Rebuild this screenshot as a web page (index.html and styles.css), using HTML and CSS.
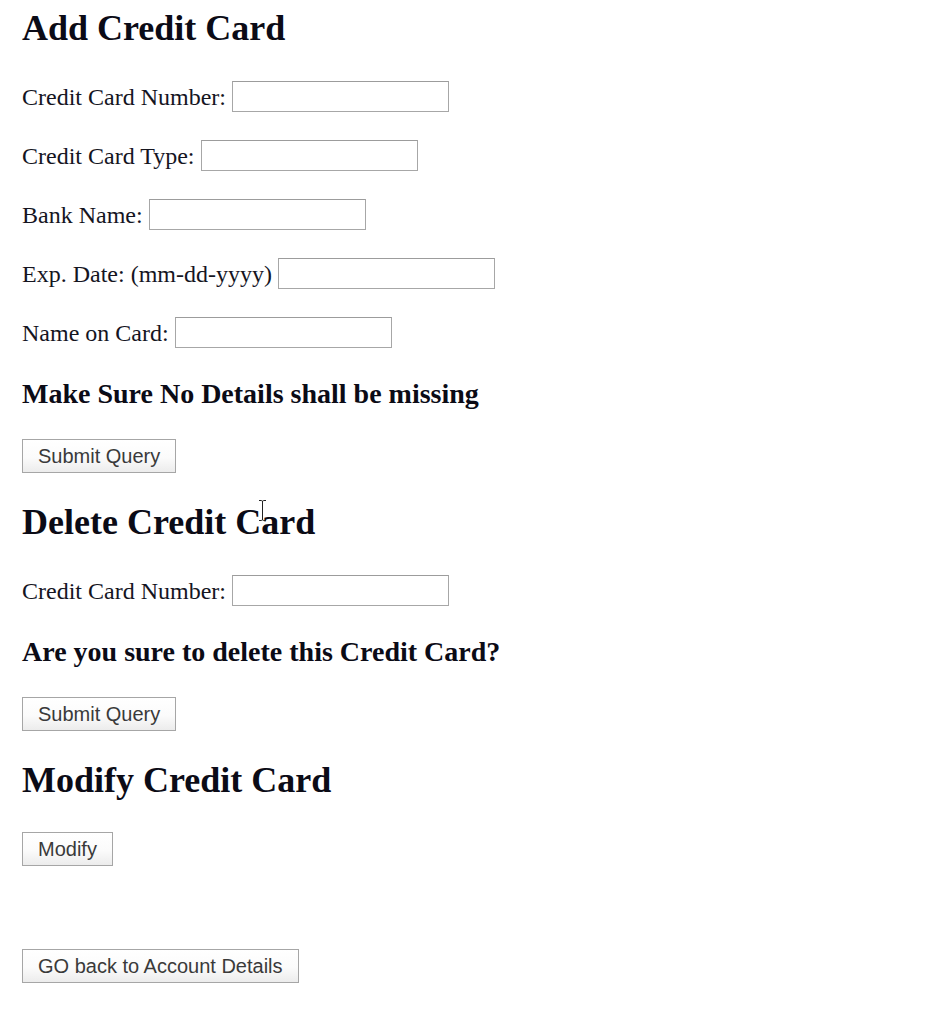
FILE: index.html
```html
<!DOCTYPE html>
<html>
<head>
<meta charset="utf-8">
<title>Credit Card</title>
<link rel="stylesheet" href="styles.css">
</head>
<body>
<div class="page">
  <form class="section">
    <h2 class="title">Add Credit Card</h2>
    <div class="fields">
      <div class="row"><span class="label">Credit Card Number:</span><input class="box" type="text"></div>
      <div class="row"><span class="label">Credit Card Type:</span><input class="box" type="text"></div>
      <div class="row"><span class="label">Bank Name:</span><input class="box" type="text"></div>
      <div class="row"><span class="label">Exp. Date: (mm-dd-yyyy)</span><input class="box" type="text"></div>
      <div class="row"><span class="label">Name on Card:</span><input class="box" type="text"></div>
    </div>
    <h3 class="note">Make Sure No Details shall be missing</h3>
    <button class="btn" type="button">Submit Query</button>
  </form>

  <form class="section">
    <h2 class="title">Delete Credit Card<span class="cursor"><svg width="9" height="23" viewBox="0 0 9 23"><path d="M1 1.5 H3.5 Q4.5 1.5 4.5 3 V20 Q4.5 21.5 3.5 21.5 H1 M8 1.5 H5.5 Q4.5 1.5 4.5 3 M4.5 20 Q4.5 21.5 5.5 21.5 H8" fill="none" stroke="#222" stroke-width="1"/></svg></span></h2>
    <div class="fields">
      <div class="row"><span class="label">Credit Card Number:</span><input class="box" type="text"></div>
    </div>
    <h3 class="note">Are you sure to delete this Credit Card?</h3>
    <button class="btn" type="button">Submit Query</button>
  </form>

  <form class="section">
    <h2 class="title">Modify Credit Card</h2>
    <button class="btn btn-modify" type="button">Modify</button>
  </form>

  <div class="back">
    <button class="btn" type="button">GO back to Account Details</button>
  </div>
</div>
</body>
</html>
```
FILE: styles.css
```css
html, body {
  margin: 0;
  padding: 0;
  background: #ffffff;
}

body {
  font-family: "Liberation Serif", "Times New Roman", serif;
  color: #15151f;
}

.page {
  padding: 7px 22px 0 22px;
  display: flex;
  flex-direction: column;
  align-items: flex-start;
}

.section {
  display: flex;
  flex-direction: column;
  align-items: flex-start;
  margin: 0;
}

.title {
  font-size: 36px;
  line-height: 42px;
  font-weight: bold;
  margin: 0;
  color: #0b0b16;
  position: relative;
}

.section + .section .title {
  margin-top: 28px;
}

.cursor {
  position: absolute;
  left: 236px;
  top: -2px;
  width: 9px;
  height: 23px;
  display: block;
}

.cursor svg {
  display: block;
}

.fields {
  display: flex;
  flex-direction: column;
  gap: 28px;
  margin-top: 32px;
}

.row {
  display: flex;
  align-items: center;
  height: 31px;
  gap: 6px;
}

.label {
  font-size: 24px;
  line-height: 28px;
  white-space: nowrap;
}

.box {
  box-sizing: border-box;
  width: 217px;
  height: 31px;
  margin: 0;
  padding: 0 4px;
  border: 1px solid #a7a7a7;
  border-top-color: #9c9c9c;
  background: #ffffff;
  font-family: "Liberation Sans", Arial, sans-serif;
  font-size: 20px;
}

.note {
  font-size: 28px;
  line-height: 32px;
  font-weight: bold;
  margin: 30px 0 29px 0;
  color: #0b0b16;
}

.btn {
  box-sizing: border-box;
  height: 34px;
  margin: 0;
  padding: 0 15px;
  border: 1px solid #a6a6a6;
  border-radius: 0;
  background: linear-gradient(#ffffff 0%, #fbfbfb 55%, #ececec 100%);
  font-family: "Liberation Sans", Arial, sans-serif;
  font-size: 20px;
  line-height: 32px;
  color: #3a3a3a;
  white-space: nowrap;
}

.btn-modify {
  margin-top: 31px;
}

.back {
  margin-top: 83px;
}
```
